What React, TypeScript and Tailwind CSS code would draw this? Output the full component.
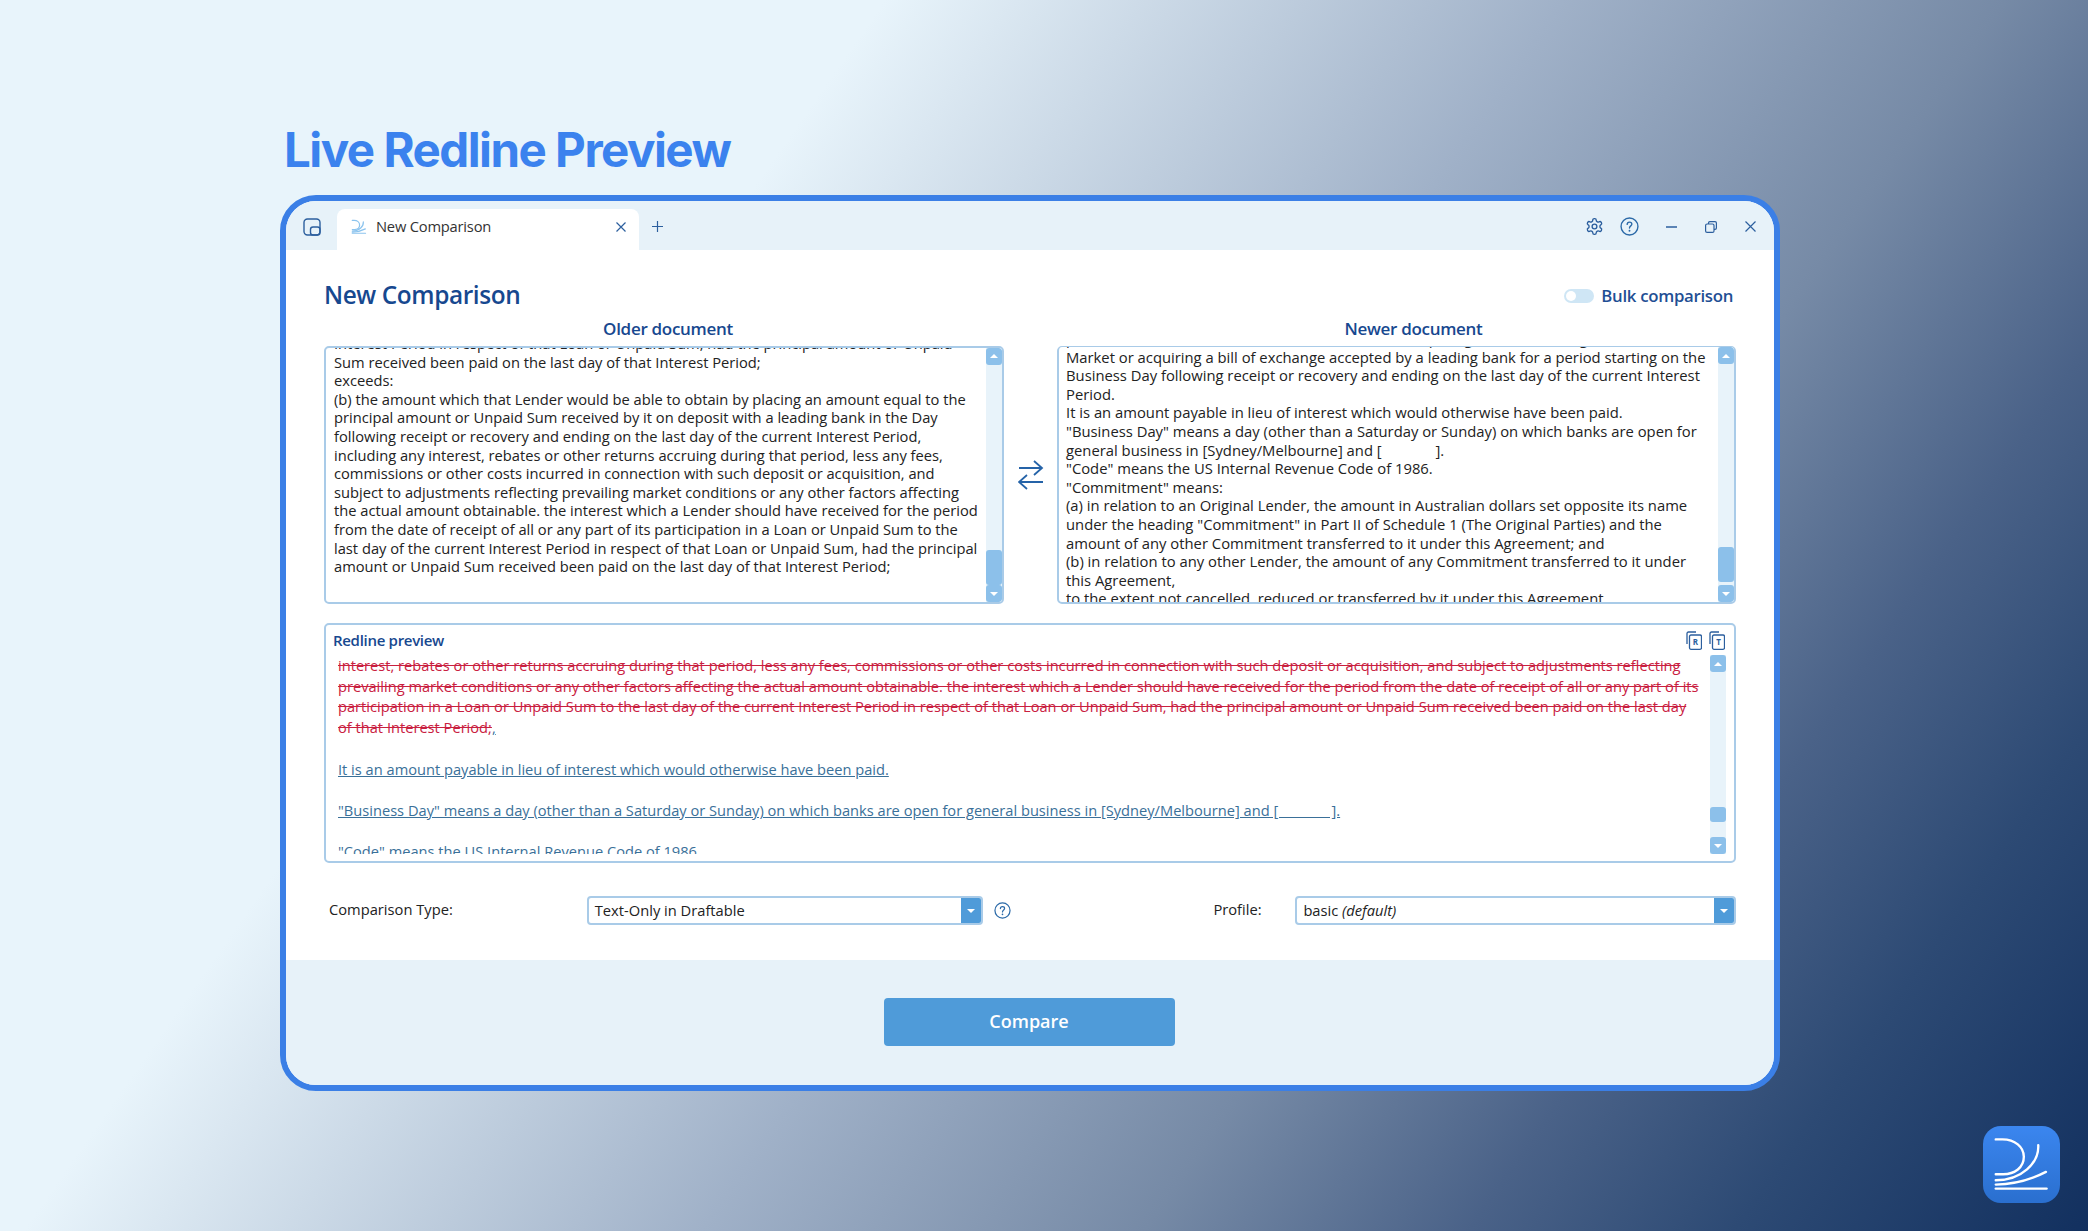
const olderLines = [
  "Interest Period in respect of that Loan or Unpaid Sum, had the principal amount or Unpaid",
  "Sum received been paid on the last day of that Interest Period;",
  "exceeds:",
  "(b) the amount which that Lender would be able to obtain by placing an amount equal to the",
  "principal amount or Unpaid Sum received by it on deposit with a leading bank in the Day",
  "following receipt or recovery and ending on the last day of the current Interest Period,",
  "including any interest, rebates or other returns accruing during that period, less any fees,",
  "commissions or other costs incurred in connection with such deposit or acquisition, and",
  "subject to adjustments reflecting prevailing market conditions or any other factors affecting",
  "the actual amount obtainable. the interest which a Lender should have received for the period",
  "from the date of receipt of all or any part of its participation in a Loan or Unpaid Sum to the",
  "last day of the current Interest Period in respect of that Loan or Unpaid Sum, had the principal",
  "amount or Unpaid Sum received been paid on the last day of that Interest Period;",
];

const newerLines = [
  "period of three months in the Bank Bill Market or acquiring a bill of exchange on the",
  "Market or acquiring a bill of exchange accepted by a leading bank for a period starting on the",
  "Business Day following receipt or recovery and ending on the last day of the current Interest",
  "Period.",
  "It is an amount payable in lieu of interest which would otherwise have been paid.",
  '"Business Day" means a day (other than a Saturday or Sunday) on which banks are open for',
  "general business in [Sydney/Melbourne] and [              ].",
  '"Code" means the US Internal Revenue Code of 1986.',
  '"Commitment" means:',
  "(a) in relation to an Original Lender, the amount in Australian dollars set opposite its name",
  'under the heading "Commitment" in Part II of Schedule 1 (The Original Parties) and the',
  "amount of any other Commitment transferred to it under this Agreement; and",
  "(b) in relation to any other Lender, the amount of any Commitment transferred to it under",
  "this Agreement,",
  "to the extent not cancelled, reduced or transferred by it under this Agreement.",
];

const deletedLines = [
  "interest, rebates or other returns accruing during that period, less any fees, commissions or other costs incurred in connection with such deposit or acquisition, and subject to adjustments reflecting",
  "prevailing market conditions or any other factors affecting the actual amount obtainable. the interest which a Lender should have received for the period from the date of receipt of all or any part of its",
  "participation in a Loan or Unpaid Sum to the last day of the current Interest Period in respect of that Loan or Unpaid Sum, had the principal amount or Unpaid Sum received been paid on the last day",
];

function DraftableMark({ className, color, weight }: { className: string; color: string; weight: number }) {
  return (
    <svg viewBox="0 0 230 230" className={className} fill="none" stroke={color} strokeWidth={weight} strokeLinecap="round">
      <path d="M38 40H58C95 40 122 62 122 92C122 124 95 144 60 144H38" />
      <path d="M165 57C168 110 115 162 38 162" />
      <path d="M188 137C140 162 90 174 38 175" />
      <path d="M38 187H190" />
    </svg>
  );
}

function ScrollBar({ before, thumb }: { before: number; thumb: number }) {
  return (
    <div className="flex h-full w-[16px] shrink-0 flex-col bg-[#e8f3fa]">
      <div className="flex h-[17px] items-center justify-center rounded-[3px] bg-[#8cc0ea]">
        <div className="h-0 w-0 border-x-[4px] border-b-[4px] border-x-transparent border-b-white" />
      </div>
      <div style={{ height: before }} />
      <div className="rounded-[3px] bg-[#8cc0ea]" style={{ height: thumb }} />
      <div className="flex-1" />
      <div className="flex h-[17px] items-center justify-center rounded-[3px] bg-[#8cc0ea]">
        <div className="h-0 w-0 border-x-[4px] border-t-[4px] border-x-transparent border-t-white" />
      </div>
    </div>
  );
}

function CopyIcon({ letter }: { letter: string }) {
  return (
    <svg viewBox="0 0 16 19" className="h-[19px] w-[16px]" fill="none" stroke="#2c5f9e" strokeWidth="1.3">
      <path d="M1 13V2.500A1.500 1.500 0 0 1 2.500 1H10" />
      <rect x="3.500" y="4" width="12" height="14.300" rx="1.500" />
      <text x="9.500" y="14" textAnchor="middle" fontSize="8" fontWeight="700" fill="#2c5f9e" stroke="none" fontFamily="Open Sans, sans-serif">
        {letter}
      </text>
    </svg>
  );
}

function HelpIcon({ className }: { className: string }) {
  return (
    <svg viewBox="0 0 18 18" className={className} fill="none" stroke="#2c6aa8" strokeWidth="1.300" strokeLinecap="round">
      <circle cx="9" cy="9" r="8" />
      <path d="M6.800 7C6.800 5.700 7.800 4.900 9 4.900C10.300 4.900 11.200 5.700 11.200 6.800C11.200 8.400 9 8.500 9 10.500" />
      <path d="M9 13V13.100" strokeWidth="1.800" />
    </svg>
  );
}

function Dropdown({ className, children }: { className: string; children: React.ReactNode }) {
  return (
    <div className={`flex h-[29px] items-center overflow-hidden rounded-[4px] border-2 border-[#a9cbe8] bg-white ${className}`}>
      <div className="-mt-px flex-1 pl-[6px] text-[14.700px] text-[#222]">{children}</div>
      <div className="flex h-full w-[20px] items-center justify-center bg-[#4f9bd9]">
        <div className="h-0 w-0 border-x-[4px] border-t-[4px] border-x-transparent border-t-white" />
      </div>
    </div>
  );
}

export default function App() {
  return (
    <div className="h-[1231px] w-full overflow-hidden bg-[linear-gradient(125deg,#e8f4fb_0%,#e8f4fb_30%,#a0b1c8_53%,#768aa6_68%,#4a6288_79%,#2d4a74_88%,#12305f_100%)] pt-[120px] font-['Open_Sans',sans-serif]">
      <h1 className="ml-[284px] h-[60px] font-['Inter',sans-serif] text-[47.500px] leading-[60px] font-bold tracking-[-1.500px] text-[#3b82ee]">
        Live Redline Preview
      </h1>

      <div className="mt-[15px] ml-[280px] flex h-[896px] w-[1500px] flex-col overflow-hidden rounded-[36px] border-[6px] border-[#3b7fe6] bg-white">
        {/* title bar */}
        <div className="flex h-[49px] shrink-0 items-end bg-[#e7f2f9] pl-[17px]">
          <svg viewBox="0 0 18 18" className="mb-[14px] h-[18px] w-[18px]" fill="none" stroke="#2c5f9e" strokeWidth="1.400">
            <rect x="1" y="1" width="16" height="16" rx="3.500" />
            <rect x="7.500" y="9" width="9.500" height="8" rx="2.500" />
          </svg>
          <div className="ml-[16px] flex h-[41px] w-[302px] items-center rounded-t-[8px] bg-white pb-[6px] pl-[12px]">
            <DraftableMark className="h-[20px] w-[20px]" color="#8cc4ee" weight={14} />
            <span className="ml-[7px] text-[14.700px] tracking-[-0.200px] text-[#333]">New Comparison</span>
            <svg viewBox="0 0 10 10" className="mr-[13px] ml-auto h-[10px] w-[10px]" stroke="#2c5f9e" strokeWidth="1.200">
              <path d="M0.500 0.500L9.500 9.500M9.500 0.500L0.500 9.500" />
            </svg>
          </div>
          <svg viewBox="0 0 11 11" className="mb-[18px] ml-[13px] h-[11px] w-[11px]" stroke="#2c5f9e" strokeWidth="1.200">
            <path d="M5.500 0V11M0 5.500H11" />
          </svg>
          <div className="ml-auto flex h-full items-center self-start pt-[2px]">
            <svg viewBox="0 0 24 24" className="h-[19px] w-[19px]" fill="none" stroke="#2c5f9e" strokeWidth="1.700" strokeLinejoin="round">
              <path d="M12.220 2h-.44a2 2 0 0 0-2 2v.18a2 2 0 0 1-1 1.730l-.43.250a2 2 0 0 1-2 0l-.150-.080a2 2 0 0 0-2.730.730l-.220.380a2 2 0 0 0 .730 2.730l.150.100a2 2 0 0 1 1 1.720v.510a2 2 0 0 1-1 1.740l-.150.090a2 2 0 0 0-.730 2.730l.220.380a2 2 0 0 0 2.730.730l.150-.080a2 2 0 0 1 2 0l.430.250a2 2 0 0 1 1 1.730V20a2 2 0 0 0 2 2h.44a2 2 0 0 0 2-2v-.18a2 2 0 0 1 1-1.730l.430-.250a2 2 0 0 1 2 0l.150.080a2 2 0 0 0 2.730-.730l.220-.390a2 2 0 0 0-.730-2.730l-.150-.080a2 2 0 0 1-1-1.740v-.500a2 2 0 0 1 1-1.740l.150-.090a2 2 0 0 0 .730-2.730l-.220-.380a2 2 0 0 0-2.730-.730l-.150.080a2 2 0 0 1-2 0l-.430-.250a2 2 0 0 1-1-1.730V4a2 2 0 0 0-2-2z" />
              <circle cx="12" cy="12" r="3" />
            </svg>
            <HelpIcon className="ml-[16px] h-[19px] w-[19px]" />
            <svg viewBox="0 0 11 2" className="ml-[27px] h-[2px] w-[11px]" stroke="#2c5f9e" strokeWidth="1.400">
              <path d="M0 1H11" />
            </svg>
            <svg viewBox="0 0 12 12" className="ml-[28px] h-[12px] w-[12px]" fill="none" stroke="#2c5f9e" strokeWidth="1.200">
              <rect x="0.600" y="3" width="8.400" height="8.400" rx="1.500" />
              <path d="M3.500 3V2A1.400 1.400 0 0 1 4.900 0.600H10A1.400 1.400 0 0 1 11.400 2V7A1.400 1.400 0 0 1 10 8.400H9" />
            </svg>
            <svg viewBox="0 0 11 11" className="mr-[18px] ml-[28px] h-[11px] w-[11px]" stroke="#2c5f9e" strokeWidth="1.200">
              <path d="M0.500 0.500L10.500 10.500M10.500 0.500L0.500 10.500" />
            </svg>
          </div>
        </div>

        {/* form */}
        <div className="flex flex-1 flex-col px-[38px] pt-[30px]">
          <div className="flex h-[30px] items-center justify-between">
            <h2 className="text-[24.400px] leading-[30px] font-semibold tracking-[-0.400px] text-[#17488f]">New Comparison</h2>
            <div className="flex items-center pt-[2px] pr-[3px]">
              <div className="flex h-[14px] w-[30px] items-center rounded-full bg-[#cfe6f5] pl-[2px]">
                <div className="h-[10px] w-[10px] rounded-full bg-white" />
              </div>
              <span className="ml-[7px] text-[16.800px] font-semibold tracking-[-0.300px] text-[#1f4f94]">Bulk comparison</span>
            </div>
          </div>

          <div className="mt-[6px] grid grid-cols-[680px_53px_679px] grid-rows-[30px_258px]">
            <div className="pl-[8px] text-center text-[17px] leading-[26px] font-semibold tracking-[-0.300px] text-[#17488f]">Older document</div>
            <div />
            <div className="pl-[34px] text-center text-[17px] leading-[26px] font-semibold tracking-[-0.300px] text-[#17488f]">Newer document</div>

            <div className="flex overflow-hidden rounded-[5px] border-2 border-[#a9cbe8]">
              <div className="flex-1 overflow-hidden pl-[8px]">
                <div className="-mt-[14px] text-[14.700px] leading-[18.600px] whitespace-pre text-[#222]">
                  {olderLines.map((line) => (
                    <div key={line}>{line}</div>
                  ))}
                </div>
              </div>
              <ScrollBar before={187} thumb={36} />
            </div>

            <div className="flex items-center justify-center">
              <svg viewBox="11 10 26 30" className="h-[30px] w-[26px]" fill="none" stroke="#2563a8" strokeWidth="1.800">
                <path d="M12 18H35M27 11L35 18L27 25M36 32H12M20 25L12 32L20 39" />
              </svg>
            </div>

            <div className="flex overflow-hidden rounded-[5px] border-2 border-t border-[#a9cbe8]">
              <div className="flex-1 overflow-hidden pl-[7px]">
                <div className="-mt-[18px] text-[14.800px] leading-[18.600px] whitespace-pre text-[#222]">
                  {newerLines.map((line) => (
                    <div key={line}>{line}</div>
                  ))}
                </div>
              </div>
              <ScrollBar before={183} thumb={35} />
            </div>
          </div>

          {/* redline */}
          <div className="mt-[19px] flex h-[240px] flex-col rounded-[5px] border-2 border-[#a9cbe8]">
            <div className="flex h-[30px] shrink-0 items-center pt-[1px] pr-[9px] pl-[7px]">
              <span className="text-[15px] font-semibold tracking-[-0.300px] text-[#17488f]">Redline preview</span>
              <div className="ml-auto flex gap-[7px]">
                <CopyIcon letter="R" />
                <CopyIcon letter="T" />
              </div>
            </div>
            <div className="flex min-h-0 flex-1 pr-[8px] pb-[7px]">
              <div className="flex-1 overflow-hidden pl-[12px] text-[14.650px] leading-[20.700px] whitespace-pre">
                {deletedLines.map((line) => (
                  <div key={line} className="text-[#c9203f] line-through">
                    {line}
                  </div>
                ))}
                <div>
                  <span className="text-[#c9203f] line-through">of that Interest Period;</span>
                  <span className="text-[#3a7099] underline">,</span>
                </div>
                <div className="h-[20.700px]" />
                <div className="text-[#3a7099] underline">It is an amount payable in lieu of interest which would otherwise have been paid.</div>
                <div className="h-[20.700px]" />
                <div className="text-[#3a7099] underline">
                  {'"Business Day" means a day (other than a Saturday or Sunday) on which banks are open for general business in [Sydney/Melbourne] and [              ].'}
                </div>
                <div className="h-[20.700px]" />
                <div className="text-[#3a7099] underline">{'"Code" means the US Internal Revenue Code of 1986.'}</div>
              </div>
              <ScrollBar before={135} thumb={15} />
            </div>
          </div>

          {/* options */}
          <div className="mt-[33px] flex items-center pl-[5px] text-[14.700px] text-[#222]">
            <span className="-mt-[2px] w-[258px]">Comparison Type:</span>
            <Dropdown className="w-[397px]">Text-Only in Draftable</Dropdown>
            <HelpIcon className="ml-[11px] h-[17px] w-[17px]" />
            <span className="-mt-[2px] ml-[202px] w-[82px]">Profile:</span>
            <Dropdown className="w-[441px]">
              basic <em>(default)</em>
            </Dropdown>
          </div>
        </div>

        <div className="flex h-[125px] shrink-0 items-center justify-center bg-[#e7f2f9] pr-[2px] pb-[2px]">
          <button className="h-[48px] w-[291px] rounded-[4px] bg-[#4f9bd9] text-[18px] font-semibold text-white">Compare</button>
        </div>
      </div>

      <div className="absolute top-[1126px] left-[1983px] flex h-[77px] w-[77px] items-center justify-center rounded-[18px] bg-[linear-gradient(180deg,#3b86ef,#2a6fcf)]">
        <DraftableMark className="h-[77px] w-[77px]" color="white" weight={7} />
      </div>
    </div>
  );
}
